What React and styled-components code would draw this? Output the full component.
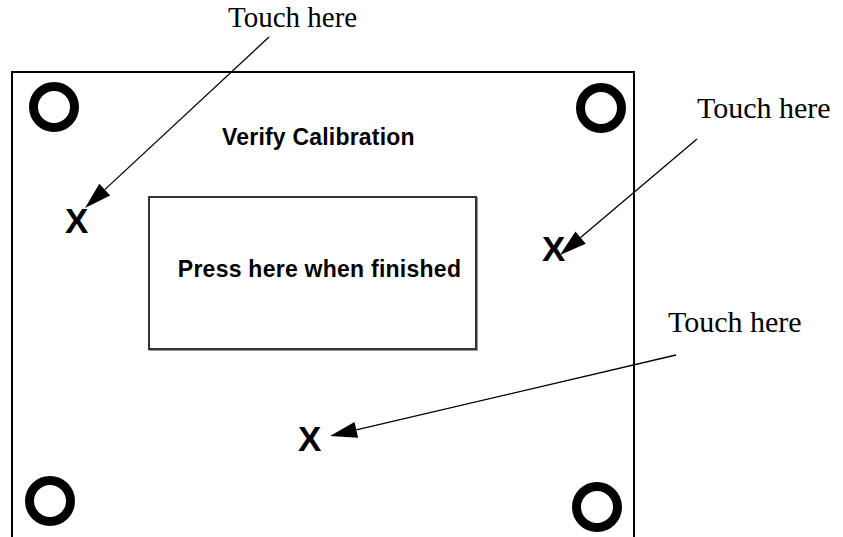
import React from 'react'
import styled, { createGlobalStyle } from 'styled-components'

const GlobalStyle = createGlobalStyle`
  html, body {
    margin: 0;
    padding: 0;
    background: #fff;
  }
`

const Page = styled.div`
  position: relative;
  width: 843px;
  height: 537px;
  overflow: hidden;
  background: #fff;
  padding: 71px 0 0 11px;
  box-sizing: border-box;
`

const Screen = styled.div`
  position: relative;
  width: 624px;
  height: 520px;
  border: 2px solid #000;
  box-sizing: border-box;
  display: flex;
  flex-direction: column;
  align-items: flex-start;
  padding: 53px 0 0 135px;
`

const Title = styled.div`
  margin-left: 74px;
  font-family: "Liberation Sans", Arial, sans-serif;
  font-weight: bold;
  font-size: 23px;
  line-height: 1;
  color: #000;
  letter-spacing: 0.2px;
`

const DoneButton = styled.div`
  margin-top: 47px;
  width: 329px;
  height: 154px;
  box-sizing: border-box;
  border: 2px solid #333;
  box-shadow: 1px 1px 0 #9a9a9a;
  display: flex;
  align-items: center;
  justify-content: center;
  padding: 0 0 7px 14px;
  font-family: "Liberation Sans", Arial, sans-serif;
  font-weight: bold;
  font-size: 23px;
  line-height: 1;
  letter-spacing: 0.25px;
  color: #000;
`

const Ring = styled.div`
  position: absolute;
  left: ${p => p.x}px;
  top: ${p => p.y}px;
  width: 50px;
  height: 50px;
  box-sizing: border-box;
  border: 9px solid #000;
  border-radius: 50%;
  filter: blur(0.6px);
`

const Target = styled.div`
  position: absolute;
  left: ${p => p.x}px;
  top: ${p => p.y}px;
  font-family: "Liberation Sans", Arial, sans-serif;
  font-weight: bold;
  font-size: 35px;
  line-height: 1;
  color: #000;
`

const Note = styled.div`
  position: absolute;
  left: ${p => p.x}px;
  top: ${p => p.y}px;
  font-family: "Liberation Serif", "Times New Roman", serif;
  font-size: ${p => p.size}px;
  line-height: 1;
  color: #000;
  white-space: nowrap;
`

const Overlay = styled.svg`
  position: absolute;
  left: 0;
  top: 0;
  pointer-events: none;
`

const rings = [
  { x: 16, y: 9 },
  { x: 563, y: 10 },
  { x: 12, y: 403 },
  { x: 559, y: 409 },
]

const targets = [
  { x: 52, y: 130 },
  { x: 529, y: 158 },
  { x: 285, y: 348 },
]

const notes = [
  { x: 228, y: 3, size: 29 },
  { x: 697, y: 93, size: 30 },
  { x: 668, y: 307, size: 30 },
]

const arrows = [
  { from: [269, 37], to: [85, 208] },
  { from: [697, 139], to: [560, 255] },
  { from: [676, 355], to: [330, 436] },
]

function Arrow ({ from, to }) {
  const [sx, sy] = from
  const [tx, ty] = to
  const len = Math.hypot(tx - sx, ty - sy)
  const dx = (tx - sx) / len
  const dy = (ty - sy) / len
  const L = 27
  const W = 8
  const bx = tx - dx * L
  const by = ty - dy * L
  const pts = [
    [tx, ty],
    [bx - dy * W, by + dx * W],
    [bx + dy * W, by - dx * W],
  ].map(p => p.join(',')).join(' ')
  return (
    <g>
      <line x1={sx} y1={sy} x2={bx} y2={by} stroke="#000" strokeWidth="1.3" />
      <polygon points={pts} fill="#000" />
    </g>
  )
}

export default function App () {
  return (
    <>
      <GlobalStyle />
      <Page>
        <Screen>
          {rings.map((r, i) => <Ring key={i} x={r.x} y={r.y} />)}
          <Title>Verify Calibration</Title>
          <DoneButton>Press here when finished</DoneButton>
          {targets.map((t, i) => <Target key={i} x={t.x} y={t.y}>X</Target>)}
        </Screen>
        {notes.map((n, i) => <Note key={i} x={n.x} y={n.y} size={n.size}>Touch here</Note>)}
        <Overlay width="843" height="537" viewBox="0 0 843 537">
          {arrows.map((a, i) => <Arrow key={i} from={a.from} to={a.to} />)}
        </Overlay>
      </Page>
    </>
  )
}
